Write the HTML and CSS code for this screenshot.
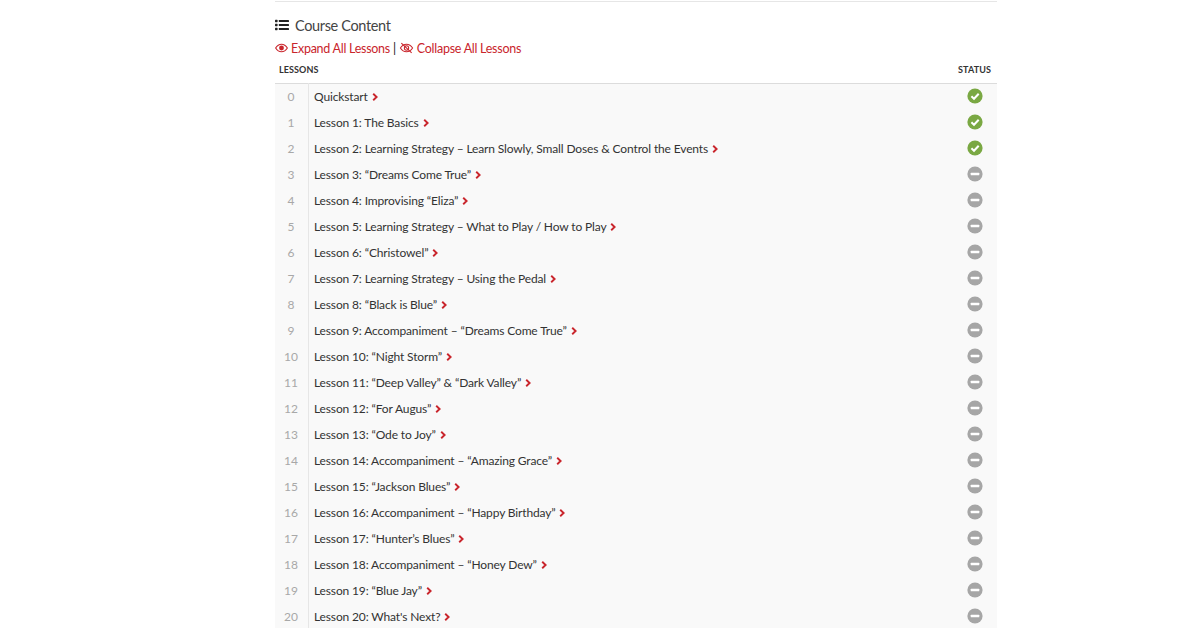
FILE: index.html
```html
<!DOCTYPE html>
<html lang="en">
<head>
<meta charset="utf-8">
<title>Course Content</title>
<link rel="stylesheet" href="styles.css">
</head>
<body>
<svg width="0" height="0" class="defs" aria-hidden="true">
  <symbol id="chev" viewBox="0 0 6 8"><path d="M1.200 .8 4.600 4 1.200 7.200" fill="none" stroke="#c9252c" stroke-width="1.900"/></symbol>
  <symbol id="ok" viewBox="0 0 16 16"><circle cx="8" cy="8" r="7.600" fill="#7aa843"/><path d="M4.400 8.300 7 10.800 11.700 5.800" fill="none" stroke="#fff" stroke-width="2"/></symbol>
  <symbol id="no" viewBox="0 0 16 16"><circle cx="8" cy="8" r="7.600" fill="#a6a6a6"/><rect x="3.700" y="6.700" width="8.600" height="2.600" rx=".6" fill="#fff"/></symbol>
</svg>
<main class="page">
  <h2 class="title">
    <svg class="list-icon" viewBox="0 0 14 12" aria-hidden="true"><g fill="#222"><rect x="0" y=".8" width="2.600" height="2.400" rx=".6"/><rect x="0" y="4.800" width="2.600" height="2.400" rx=".6"/><rect x="0" y="8.800" width="2.600" height="2.400" rx=".6"/><rect x="3.800" y="1.100" width="10.200" height="1.800" rx=".3"/><rect x="3.800" y="5.100" width="10.200" height="1.800" rx=".3"/><rect x="3.800" y="9.100" width="10.200" height="1.800" rx=".3"/></g></svg>
    Course Content
  </h2>
  <p class="toggles">
    <svg class="eye" viewBox="0 0 14 10" aria-hidden="true"><path d="M.7 5C2.300 2.300 4.400 .9 7 .9s4.700 1.400 6.300 4.100C11.700 7.700 9.600 9.100 7 9.100S2.300 7.700.7 5Z" fill="none" stroke="#c9252c" stroke-width="1.200"/><circle cx="7" cy="5" r="2.600" fill="#c9252c"/></svg>
    <span class="link">Expand All Lessons</span><span class="sep">|</span>
    <svg class="eye-off" viewBox="0 0 16 12" aria-hidden="true"><path d="M1.500 6C3.200 3.300 5.300 2 8 2s4.800 1.300 6.500 4C12.800 8.700 10.700 10 8 10S3.200 8.700 1.500 6Z" fill="none" stroke="#c9252c" stroke-width="1.100"/><circle cx="8" cy="6" r="2.300" fill="none" stroke="#c9252c" stroke-width="1.100"/><path d="M2.500.8 13.500 11.200" stroke="#c9252c" stroke-width="1.200"/></svg>
    <span class="link">Collapse All Lessons</span>
  </p>
  <div class="head"><span>LESSONS</span><span>STATUS</span></div>
  <ol class="lessons">
    <li class="row"><span class="num">0</span><span class="name">Quickstart <svg class="chev"><use href="#chev"/></svg></span><svg class="status"><use href="#ok"/></svg></li>
    <li class="row"><span class="num">1</span><span class="name">Lesson 1: The Basics <svg class="chev"><use href="#chev"/></svg></span><svg class="status"><use href="#ok"/></svg></li>
    <li class="row"><span class="num">2</span><span class="name">Lesson 2: Learning Strategy – Learn Slowly, Small Doses &amp; Control the Events <svg class="chev"><use href="#chev"/></svg></span><svg class="status"><use href="#ok"/></svg></li>
    <li class="row"><span class="num">3</span><span class="name">Lesson 3: “Dreams Come True” <svg class="chev"><use href="#chev"/></svg></span><svg class="status"><use href="#no"/></svg></li>
    <li class="row"><span class="num">4</span><span class="name">Lesson 4: Improvising “Eliza” <svg class="chev"><use href="#chev"/></svg></span><svg class="status"><use href="#no"/></svg></li>
    <li class="row"><span class="num">5</span><span class="name">Lesson 5: Learning Strategy – What to Play / How to Play <svg class="chev"><use href="#chev"/></svg></span><svg class="status"><use href="#no"/></svg></li>
    <li class="row"><span class="num">6</span><span class="name">Lesson 6: “Christowel” <svg class="chev"><use href="#chev"/></svg></span><svg class="status"><use href="#no"/></svg></li>
    <li class="row"><span class="num">7</span><span class="name">Lesson 7: Learning Strategy – Using the Pedal <svg class="chev"><use href="#chev"/></svg></span><svg class="status"><use href="#no"/></svg></li>
    <li class="row"><span class="num">8</span><span class="name">Lesson 8: “Black is Blue” <svg class="chev"><use href="#chev"/></svg></span><svg class="status"><use href="#no"/></svg></li>
    <li class="row"><span class="num">9</span><span class="name">Lesson 9: Accompaniment – “Dreams Come True” <svg class="chev"><use href="#chev"/></svg></span><svg class="status"><use href="#no"/></svg></li>
    <li class="row"><span class="num">10</span><span class="name">Lesson 10: “Night Storm” <svg class="chev"><use href="#chev"/></svg></span><svg class="status"><use href="#no"/></svg></li>
    <li class="row"><span class="num">11</span><span class="name">Lesson 11: “Deep Valley” &amp; “Dark Valley” <svg class="chev"><use href="#chev"/></svg></span><svg class="status"><use href="#no"/></svg></li>
    <li class="row"><span class="num">12</span><span class="name">Lesson 12: “For Augus” <svg class="chev"><use href="#chev"/></svg></span><svg class="status"><use href="#no"/></svg></li>
    <li class="row"><span class="num">13</span><span class="name">Lesson 13: “Ode to Joy” <svg class="chev"><use href="#chev"/></svg></span><svg class="status"><use href="#no"/></svg></li>
    <li class="row"><span class="num">14</span><span class="name">Lesson 14: Accompaniment – “Amazing Grace” <svg class="chev"><use href="#chev"/></svg></span><svg class="status"><use href="#no"/></svg></li>
    <li class="row"><span class="num">15</span><span class="name">Lesson 15: “Jackson Blues” <svg class="chev"><use href="#chev"/></svg></span><svg class="status"><use href="#no"/></svg></li>
    <li class="row"><span class="num">16</span><span class="name">Lesson 16: Accompaniment – “Happy Birthday” <svg class="chev"><use href="#chev"/></svg></span><svg class="status"><use href="#no"/></svg></li>
    <li class="row"><span class="num">17</span><span class="name">Lesson 17: “Hunter’s Blues” <svg class="chev"><use href="#chev"/></svg></span><svg class="status"><use href="#no"/></svg></li>
    <li class="row"><span class="num">18</span><span class="name">Lesson 18: Accompaniment – “Honey Dew” <svg class="chev"><use href="#chev"/></svg></span><svg class="status"><use href="#no"/></svg></li>
    <li class="row"><span class="num">19</span><span class="name">Lesson 19: “Blue Jay” <svg class="chev"><use href="#chev"/></svg></span><svg class="status"><use href="#no"/></svg></li>
    <li class="row"><span class="num">20</span><span class="name">Lesson 20: What's Next? <svg class="chev"><use href="#chev"/></svg></span><svg class="status"><use href="#no"/></svg></li>
  </ol>
</main>
</body>
</html>
```
FILE: styles.css
```css
* { box-sizing: border-box; }
html, body { margin: 0; height: 628px; overflow: hidden; background: #fff; }
body { font-family: "Lato", "Open Sans", sans-serif; color: #2b2b2b; }
.defs { position: absolute; }
.page { width: 722px; margin: 1px 0 0 275px; border-top: 1px solid #e6e6e6; }
.title { display: flex; align-items: center; gap: 6px; margin: 14px 0 0; height: 18px; font-size: 14.5px; font-weight: 400; color: #444; letter-spacing: -.35px; }
.list-icon { width: 14px; height: 12px; }
.toggles { display: flex; align-items: center; margin: 5px 0 0; height: 18px; font-size: 12.5px; color: #c9252c; white-space: pre; letter-spacing: -.27px; }
.eye { width: 13px; height: 10px; margin-right: 3px; }
.eye-off { width: 15px; height: 12px; margin: 0 3px; }
.sep { color: #222; margin-left: 3px; }
.head { display: flex; justify-content: space-between; align-items: center; height: 27px; padding: 0 6px 2px 4px; font-size: 9px; font-weight: 700; color: #333; border-bottom: 1px solid #dcdcdc; letter-spacing: .1px; }
.lessons { list-style: none; margin: 0; padding: 0; background: #f9f9f9; }
.row { display: flex; align-items: center; height: 26px; padding-bottom: 2px; }
.num { width: 34px; height: 26px; display: flex; align-items: center; justify-content: center; border-right: 1px solid #e6e6e6; font-size: 12px; color: #a8a8a8; padding-right: 1px; }
.name { flex: 1; padding-left: 5px; font-size: 12px; color: #333; letter-spacing: -.14px; }
.chev { width: 6px; height: 8px; margin-left: 1px; }
.status { width: 16px; height: 16px; margin-right: 14px; }
```
